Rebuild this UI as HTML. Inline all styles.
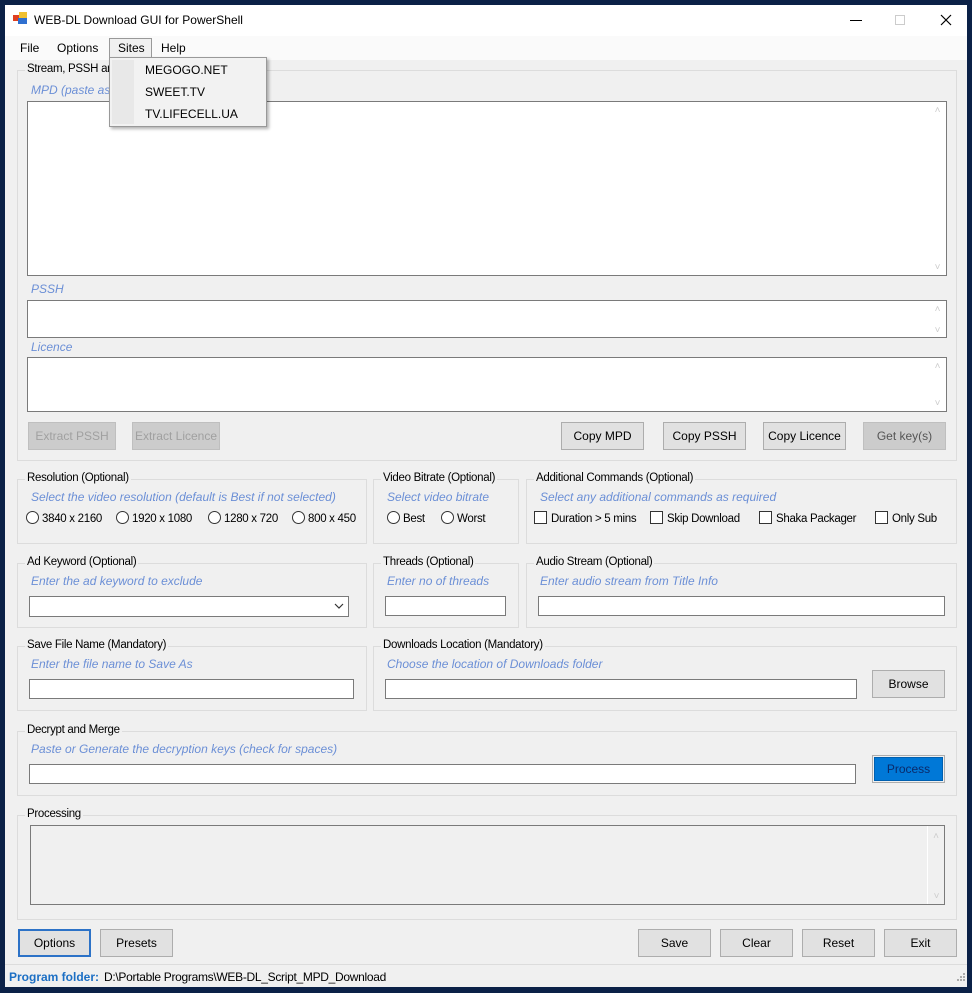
<!DOCTYPE html>
<html><head><meta charset="utf-8"><style>
*{box-sizing:border-box;margin:0;padding:0}
body{width:972px;height:993px;background:#0b2147;position:relative;overflow:hidden;font-family:"Liberation Sans",sans-serif;font-size:12px;color:#000}
.a{position:absolute}
.win{left:5px;top:5px;width:962px;height:982px;background:#f0f0f0}
.title{left:5px;top:5px;width:962px;height:31px;background:#fff}
.menu{left:5px;top:36px;width:962px;height:24px;background:#fafafa}
.g{position:absolute;border:1px solid #dcdcdc}
.gl{position:absolute;top:-8px;left:7px;background:#f0f0f0;padding:0 2px;font-size:11.5px;letter-spacing:-0.3px}
.h{position:absolute;color:#6b8fd6;font-style:italic;font-size:12px}
.tb{position:absolute;background:#fff;border:1px solid #7a7a7a}
.btn{position:absolute;background:#e1e1e1;border:1px solid #adadad;text-align:center;font-size:12px}
.dis{background:#cccccc;border-color:#bfbfbf;color:#a0a0a0}
.rad{display:inline-block;width:13px;height:13px;border:1px solid #333;border-radius:50%;vertical-align:-2px;margin-right:3px;background:#fff}
.chk{display:inline-block;width:13px;height:13px;border:1px solid #333;vertical-align:-2px;margin-right:4px;background:#fff}
.o{font-size:11.5px;letter-spacing:-0.3px;white-space:nowrap}
.sb{position:absolute;right:0;top:0;bottom:0;width:17px;background:#fff;color:#ccc;font-size:10px;text-align:center}
</style></head><body>
<div class="a win"></div>
<div class="a title"></div>
<svg class="a" style="left:13px;top:12px" width="15" height="13"><rect x="0" y="3" width="6" height="6" fill="#e04020"/><rect x="6" y="0" width="8" height="7" fill="#f0c030"/><rect x="5" y="6" width="9" height="6" fill="#3070d0"/></svg>
<div class="a" style="left:34px;top:13px;font-size:12px">WEB-DL Download GUI for PowerShell</div>
<div class="a" style="left:850px;top:20px;width:12px;height:1px;background:#000"></div>
<div class="a" style="left:895px;top:15px;width:10px;height:10px;border:1px solid #ccc"></div>
<svg class="a" style="left:940px;top:14px" width="12" height="12"><path d="M1 1L11 11M11 1L1 11" stroke="#000" stroke-width="1.2"/></svg>
<div class="a menu"></div>
<div class="a" style="left:20px;top:41px">File</div>
<div class="a" style="left:57px;top:41px">Options</div>
<div class="a" style="left:109px;top:38px;width:43px;height:22px;border:1px solid #999;border-bottom:none;background:#f0f0f0"></div>
<div class="a" style="left:118px;top:41px">Sites</div>
<div class="a" style="left:161px;top:41px">Help</div>

<div class="g" style="left:17px;top:70px;width:940px;height:391px"><div class="gl">Stream, PSSH and Licence (Mandatory)</div></div>
<div class="h" style="left:31px;top:83px">MPD (paste as is)</div>
<div class="tb" style="left:27px;top:101px;width:920px;height:175px"><div class="sb"><div style="margin-top:3px">&#x2C4;</div><div style="position:absolute;bottom:2px;width:17px">&#x2C5;</div></div></div>
<div class="h" style="left:31px;top:282px">PSSH</div>
<div class="tb" style="left:27px;top:300px;width:920px;height:38px"><div class="sb"><div style="margin-top:3px">&#x2C4;</div><div style="position:absolute;bottom:1px;width:17px">&#x2C5;</div></div></div>
<div class="h" style="left:31px;top:340px">Licence</div>
<div class="tb" style="left:27px;top:357px;width:920px;height:55px"><div class="sb"><div style="margin-top:3px">&#x2C4;</div><div style="position:absolute;bottom:2px;width:17px">&#x2C5;</div></div></div>
<div class="btn dis" style="left:28px;top:422px;width:88px;height:28px;line-height:26px">Extract PSSH</div>
<div class="btn dis" style="left:132px;top:422px;width:88px;height:28px;line-height:26px">Extract Licence</div>
<div class="btn" style="left:561px;top:422px;width:83px;height:28px;line-height:26px">Copy MPD</div>
<div class="btn" style="left:663px;top:422px;width:83px;height:28px;line-height:26px">Copy PSSH</div>
<div class="btn" style="left:763px;top:422px;width:83px;height:28px;line-height:26px">Copy Licence</div>
<div class="btn dis" style="left:863px;top:422px;width:83px;height:28px;line-height:26px;color:#555">Get key(s)</div>

<div class="g" style="left:17px;top:479px;width:350px;height:65px"><div class="gl">Resolution (Optional)</div></div>
<div class="h" style="left:31px;top:490px">Select the video resolution (default is Best if not selected)</div>
<div class="a o" style="left:26px;top:511px"><span class="rad"></span>3840 x 2160</div>
<div class="a o" style="left:116px;top:511px"><span class="rad"></span>1920 x 1080</div>
<div class="a o" style="left:208px;top:511px"><span class="rad"></span>1280 x 720</div>
<div class="a o" style="left:292px;top:511px"><span class="rad"></span>800 x 450</div>
<div class="g" style="left:373px;top:479px;width:146px;height:65px"><div class="gl">Video Bitrate (Optional)</div></div>
<div class="h" style="left:387px;top:490px">Select video bitrate</div>
<div class="a o" style="left:387px;top:511px"><span class="rad"></span>Best</div>
<div class="a o" style="left:441px;top:511px"><span class="rad"></span>Worst</div>
<div class="g" style="left:526px;top:479px;width:431px;height:65px"><div class="gl">Additional Commands (Optional)</div></div>
<div class="h" style="left:540px;top:490px">Select any additional commands as required</div>
<div class="a o" style="left:534px;top:511px"><span class="chk"></span>Duration &gt; 5 mins</div>
<div class="a o" style="left:650px;top:511px"><span class="chk"></span>Skip Download</div>
<div class="a o" style="left:759px;top:511px"><span class="chk"></span>Shaka Packager</div>
<div class="a o" style="left:875px;top:511px"><span class="chk"></span>Only Sub</div>

<div class="g" style="left:17px;top:563px;width:350px;height:65px"><div class="gl">Ad Keyword (Optional)</div></div>
<div class="h" style="left:31px;top:574px">Enter the ad keyword to exclude</div>
<div class="tb" style="left:29px;top:596px;width:320px;height:21px"><svg class="a" style="right:4px;top:6px" width="10" height="7"><path d="M1 1L5 5L9 1" stroke="#333" fill="none" stroke-width="1.2"/></svg></div>
<div class="g" style="left:373px;top:563px;width:146px;height:65px"><div class="gl">Threads (Optional)</div></div>
<div class="h" style="left:387px;top:574px">Enter no of threads</div>
<div class="tb" style="left:385px;top:596px;width:121px;height:20px"></div>
<div class="g" style="left:526px;top:563px;width:431px;height:65px"><div class="gl">Audio Stream (Optional)</div></div>
<div class="h" style="left:540px;top:574px">Enter audio stream from Title Info</div>
<div class="tb" style="left:538px;top:596px;width:407px;height:20px"></div>

<div class="g" style="left:17px;top:646px;width:350px;height:65px"><div class="gl">Save File Name (Mandatory)</div></div>
<div class="h" style="left:31px;top:657px">Enter the file name to Save As</div>
<div class="tb" style="left:29px;top:679px;width:325px;height:20px"></div>
<div class="g" style="left:373px;top:646px;width:584px;height:65px"><div class="gl">Downloads Location (Mandatory)</div></div>
<div class="h" style="left:387px;top:657px">Choose the location of Downloads folder</div>
<div class="tb" style="left:385px;top:679px;width:472px;height:20px"></div>
<div class="btn" style="left:872px;top:670px;width:73px;height:28px;line-height:26px">Browse</div>

<div class="g" style="left:17px;top:731px;width:940px;height:65px"><div class="gl">Decrypt and Merge</div></div>
<div class="h" style="left:31px;top:742px">Paste or Generate the decryption keys (check for spaces)</div>
<div class="tb" style="left:29px;top:764px;width:827px;height:20px"></div>
<div class="a" style="left:872px;top:755px;width:73px;height:28px;border:1px solid #adadad;padding:1px"><div style="width:100%;height:100%;background:#0078d7;border:1px solid #0060b0;text-align:center;line-height:22px;color:#0a2a6a">Process</div></div>

<div class="g" style="left:17px;top:815px;width:940px;height:105px"><div class="gl">Processing</div></div>
<div class="tb" style="left:30px;top:825px;width:915px;height:80px;background:#f0f0f0"><div class="sb" style="background:#f0f0f0;border-left:1px solid #fff"><div style="margin-top:5px">&#x2C4;</div><div style="position:absolute;bottom:2px;width:17px">&#x2C5;</div></div></div>

<div class="btn" style="left:18px;top:929px;width:73px;height:28px;line-height:24px;border:2px solid #2c72c7;background:#e1e1e1">Options</div>
<div class="btn" style="left:100px;top:929px;width:73px;height:28px;line-height:26px">Presets</div>
<div class="btn" style="left:638px;top:929px;width:73px;height:28px;line-height:26px">Save</div>
<div class="btn" style="left:720px;top:929px;width:73px;height:28px;line-height:26px">Clear</div>
<div class="btn" style="left:802px;top:929px;width:73px;height:28px;line-height:26px">Reset</div>
<div class="btn" style="left:884px;top:929px;width:73px;height:28px;line-height:26px">Exit</div>

<div class="a" style="left:5px;top:964px;width:962px;height:1px;background:#dcdcdc"></div>
<div class="a" style="left:9px;top:970px;font-size:12px;color:#1c6fc4;font-weight:bold">Program folder:</div>
<div class="a" style="left:104px;top:970px;font-size:12px;letter-spacing:-0.3px">D:\Portable Programs\WEB-DL_Script_MPD_Download</div>
<svg class="a" style="left:954px;top:972px" width="12" height="12" fill="#aaa"><rect x="9" y="1" width="2" height="2"/><rect x="6" y="4" width="2" height="2"/><rect x="9" y="4" width="2" height="2"/><rect x="3" y="7" width="2" height="2"/><rect x="6" y="7" width="2" height="2"/><rect x="9" y="7" width="2" height="2"/></svg>

<div class="a" style="left:109px;top:57px;width:158px;height:70px;background:#f2f2f2;border:1px solid #999;box-shadow:2px 2px 3px rgba(0,0,0,.3)">
<div class="a" style="left:2px;top:2px;width:22px;height:64px;background:#e8e8e8"></div>
<div class="a" style="left:35px;top:5px;font-size:12px">MEGOGO.NET</div>
<div class="a" style="left:35px;top:27px;font-size:12px">SWEET.TV</div>
<div class="a" style="left:35px;top:49px;font-size:12px">TV.LIFECELL.UA</div>
</div>
</body></html>
